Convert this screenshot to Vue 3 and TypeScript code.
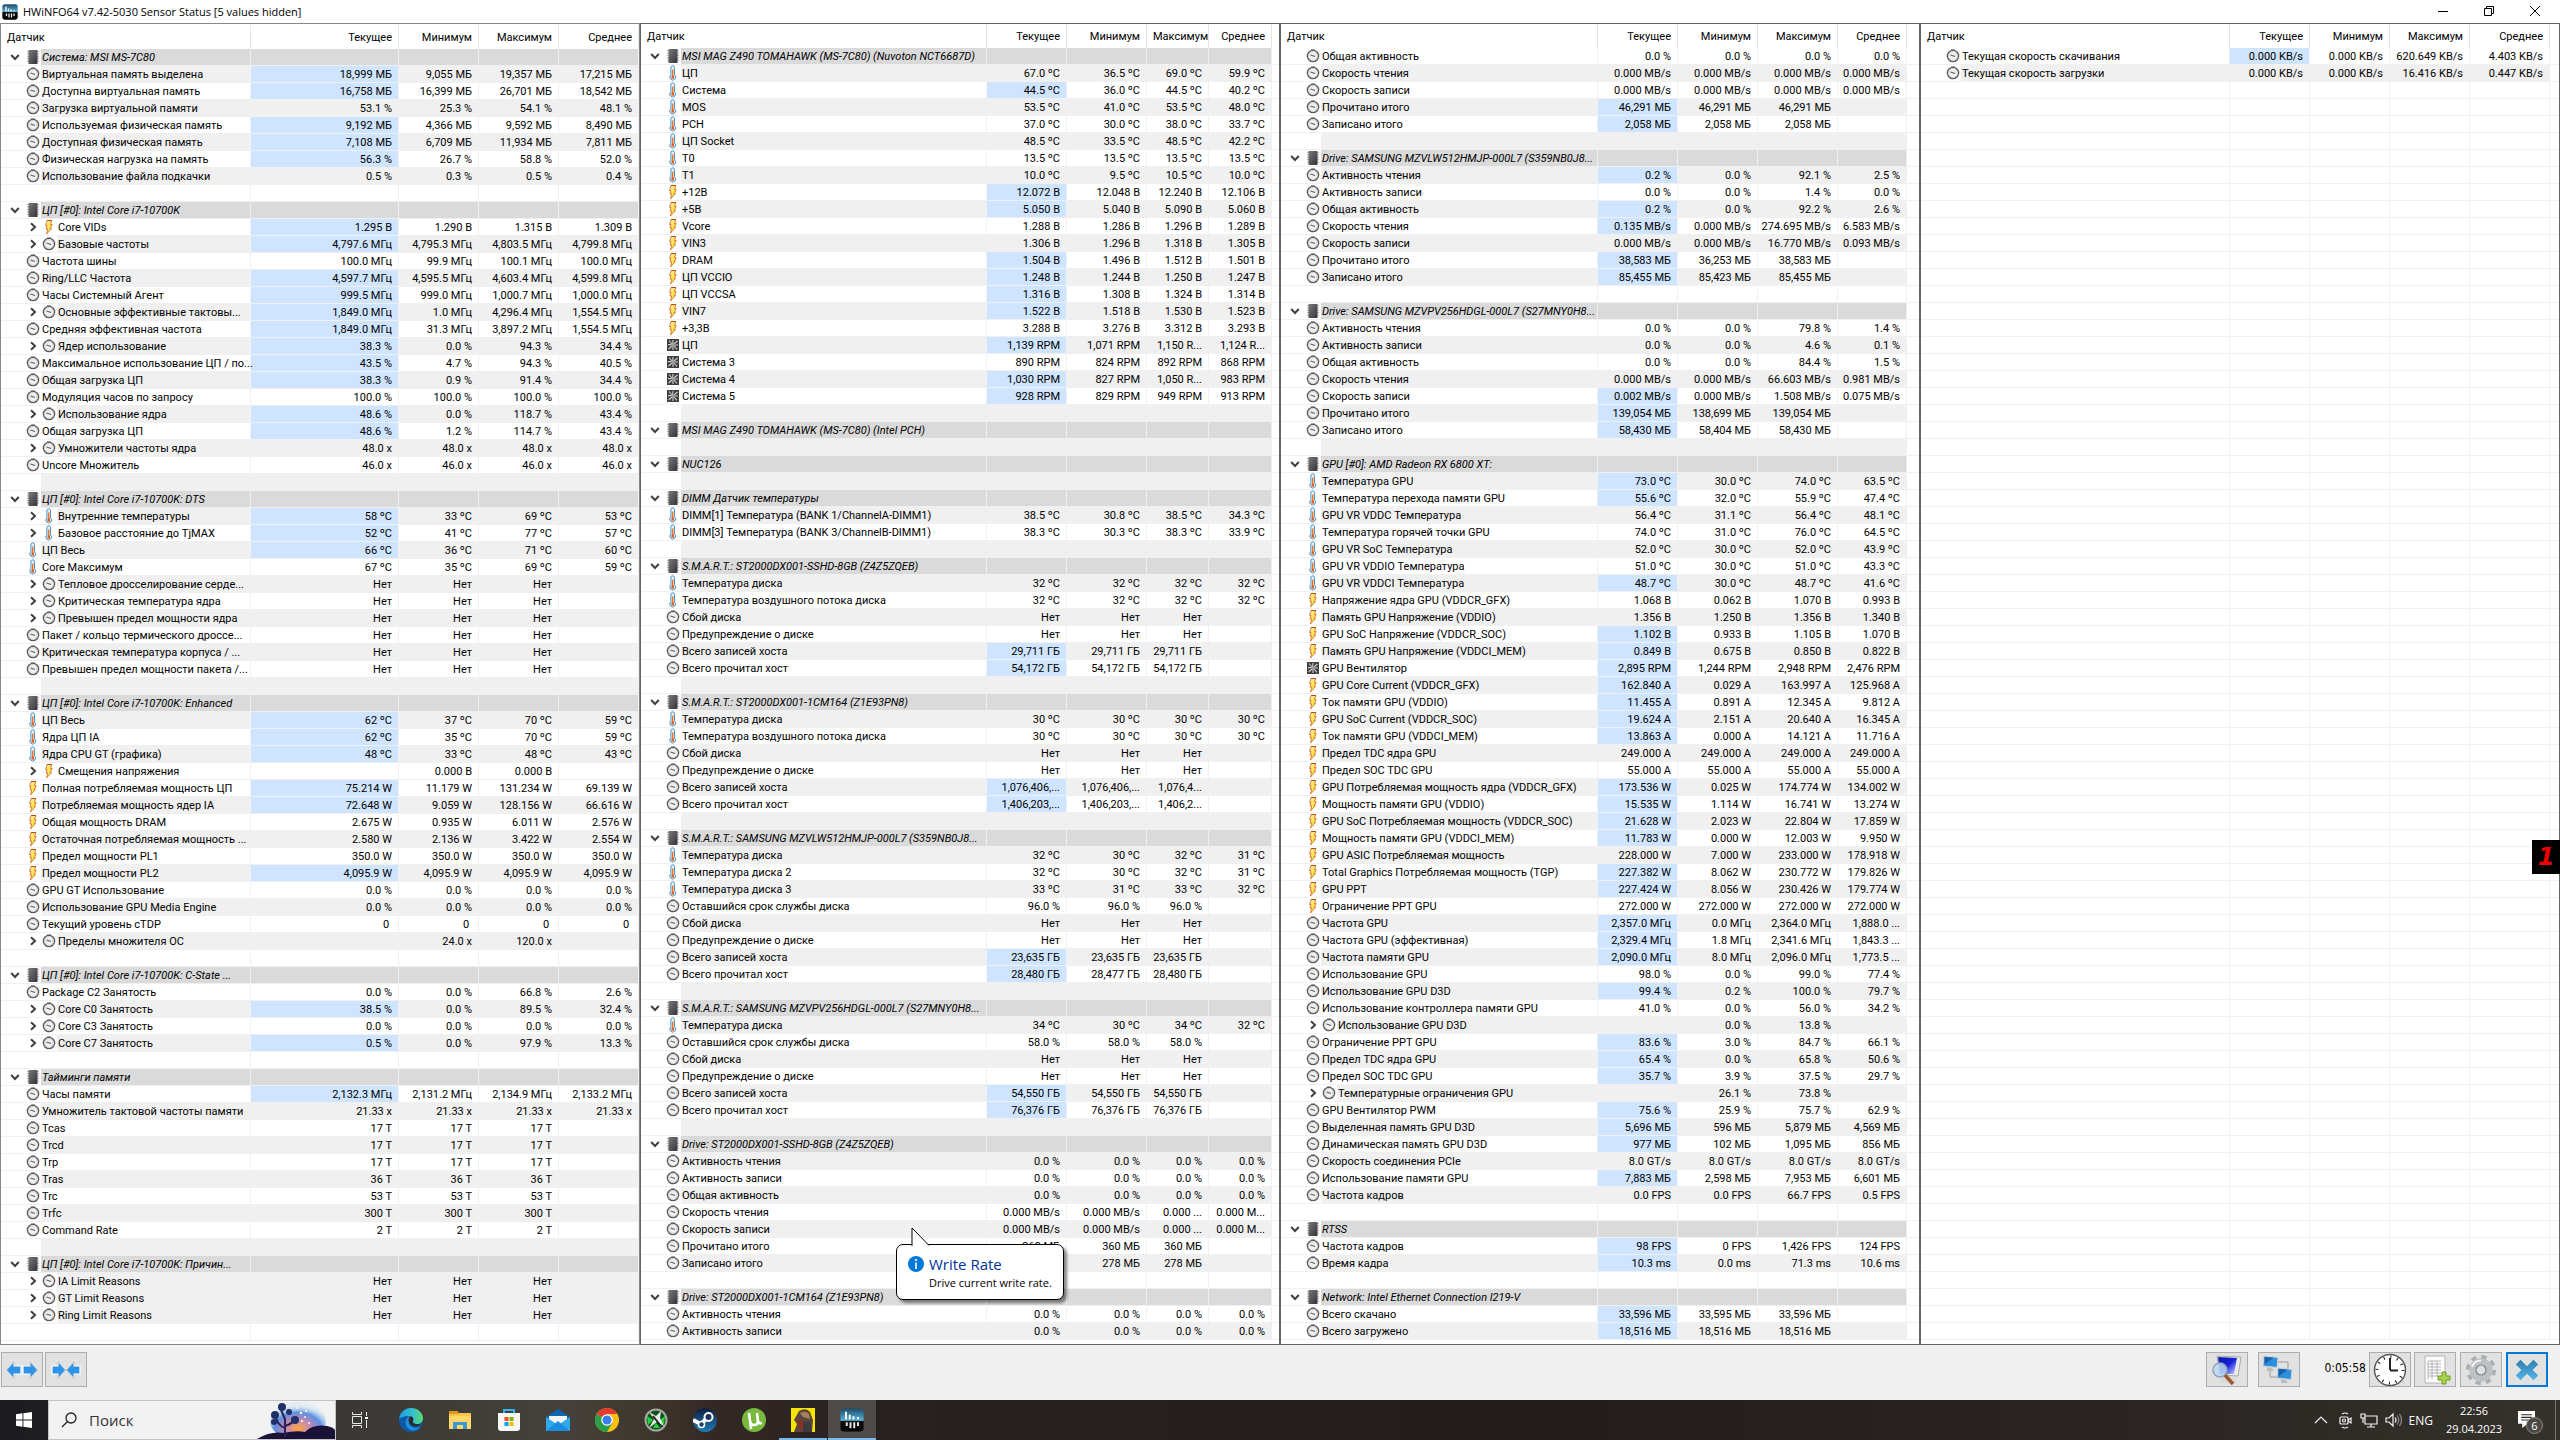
<script setup lang="ts">
import { computed } from 'vue'

type Kind = 'group' | 'blank' | 'clock' | 'temp' | 'volt' | 'fan'
interface Row { kind: Kind; nested: boolean; shaded: boolean; hot: boolean; tip: boolean; name: string; values: string[] }
interface Panel { id: string; widths: number[]; rest: number; rows: Row[] }

const KINDS: Record<string, Kind> = { G: 'group', B: 'blank', c: 'clock', t: 'temp', v: 'volt', f: 'fan' }
const ROW_COUNT = 76

// Line format: kind letter, then flags (> nested, # shaded, * changed value, ! balloon), name and four values
function parse(text: string): Row[] {
  return text.trim().split('\n').map((line) => {
    const [code, name = '', ...values] = line.split('|')
    return {
      kind: KINDS[code[0]],
      nested: code.includes('>'),
      shaded: code.includes('#'),
      hot: code.includes('*'),
      tip: code.includes('!'),
      name,
      values: [0, 1, 2, 3].map((i) => values[i] ?? ''),
    }
  })
}

const first = `
G|Система: MSI MS-7C80
c#*|Виртуальная память выделена|18,999 МБ|9,055 МБ|19,357 МБ|17,215 МБ
c*|Доступна виртуальная память|16,758 МБ|16,399 МБ|26,701 МБ|18,542 МБ
c#|Загрузка виртуальной памяти|53.1 %|25.3 %|54.1 %|48.1 %
c*|Используемая физическая память|9,192 МБ|4,366 МБ|9,592 МБ|8,490 МБ
c#*|Доступная физическая память|7,108 МБ|6,709 МБ|11,934 МБ|7,811 МБ
c*|Физическая нагрузка на память|56.3 %|26.7 %|58.8 %|52.0 %
c#|Использование файла подкачки|0.5 %|0.3 %|0.5 %|0.4 %
B
G|ЦП [#0]: Intel Core i7-10700K
v>*|Core VIDs|1.295 В|1.290 В|1.315 В|1.309 В
c>#*|Базовые частоты|4,797.6 МГц|4,795.3 МГц|4,803.5 МГц|4,799.8 МГц
c|Частота шины|100.0 МГц|99.9 МГц|100.1 МГц|100.0 МГц
c#*|Ring/LLC Частота|4,597.7 МГц|4,595.5 МГц|4,603.4 МГц|4,599.8 МГц
c*|Часы Системный Агент|999.5 МГц|999.0 МГц|1,000.7 МГц|1,000.0 МГц
c>#*|Основные эффективные тактовы...|1,849.0 МГц|1.0 МГц|4,296.4 МГц|1,554.5 МГц
c*|Средняя эффективная частота|1,849.0 МГц|31.3 МГц|3,897.2 МГц|1,554.5 МГц
c>#*|Ядер использование|38.3 %|0.0 %|94.3 %|34.4 %
c*|Максимальное использование ЦП / по...|43.5 %|4.7 %|94.3 %|40.5 %
c#*|Общая загрузка ЦП|38.3 %|0.9 %|91.4 %|34.4 %
c|Модуляция часов по запросу|100.0 %|100.0 %|100.0 %|100.0 %
c>#*|Использование ядра|48.6 %|0.0 %|118.7 %|43.4 %
c*|Общая загрузка ЦП|48.6 %|1.2 %|114.7 %|43.4 %
c>#|Умножители частоты ядра|48.0 x|48.0 x|48.0 x|48.0 x
c|Uncore Множитель|46.0 x|46.0 x|46.0 x|46.0 x
B#
G|ЦП [#0]: Intel Core i7-10700K: DTS
t>#*|Внутренние температуры|58 ºC|33 ºC|69 ºC|53 ºC
t>*|Базовое расстояние до TjMAX|52 ºC|41 ºC|77 ºC|57 ºC
t#*|ЦП Весь|66 ºC|36 ºC|71 ºC|60 ºC
t|Core Максимум|67 ºC|35 ºC|69 ºC|59 ºC
c>#|Тепловое дросселирование серде...|Нет|Нет|Нет
c>|Критическая температура ядра|Нет|Нет|Нет
c>#|Превышен предел мощности ядра|Нет|Нет|Нет
c|Пакет / кольцо термического дроссе...|Нет|Нет|Нет
c#|Критическая температура корпуса / ...|Нет|Нет|Нет
c|Превышен предел мощности пакета /...|Нет|Нет|Нет
B#
G|ЦП [#0]: Intel Core i7-10700K: Enhanced
t#*|ЦП Весь|62 ºC|37 ºC|70 ºC|59 ºC
t*|Ядра ЦП IA|62 ºC|35 ºC|70 ºC|59 ºC
t#*|Ядра CPU GT (графика)|48 ºC|33 ºC|48 ºC|43 ºC
v>|Смещения напряжения||0.000 В|0.000 В
v*|Полная потребляемая мощность ЦП|75.214 W|11.179 W|131.234 W|69.139 W
v#*|Потребляемая мощность ядер IA|72.648 W|9.059 W|128.156 W|66.616 W
v|Общая мощность DRAM|2.675 W|0.935 W|6.011 W|2.576 W
v#|Остаточная потребляемая мощность ...|2.580 W|2.136 W|3.422 W|2.554 W
v|Предел мощности PL1|350.0 W|350.0 W|350.0 W|350.0 W
v#*|Предел мощности PL2|4,095.9 W|4,095.9 W|4,095.9 W|4,095.9 W
c|GPU GT Использование|0.0 %|0.0 %|0.0 %|0.0 %
c#|Использование GPU Media Engine|0.0 %|0.0 %|0.0 %|0.0 %
c|Текущий уровень cTDP|0 |0 |0 |0 
c>#|Пределы множителя ОС||24.0 x|120.0 x
B
G|ЦП [#0]: Intel Core i7-10700K: C-State ...
c|Package C2 Занятость|0.0 %|0.0 %|66.8 %|2.6 %
c>#*|Core C0 Занятость|38.5 %|0.0 %|89.5 %|32.4 %
c>|Core C3 Занятость|0.0 %|0.0 %|0.0 %|0.0 %
c>#*|Core C7 Занятость|0.5 %|0.0 %|97.9 %|13.3 %
B
G|Тайминги памяти
c*|Часы памяти|2,132.3 МГц|2,131.2 МГц|2,134.9 МГц|2,133.2 МГц
c#|Умножитель тактовой частоты памяти|21.33 x|21.33 x|21.33 x|21.33 x
c|Tcas|17 T|17 T|17 T
c#|Trcd|17 T|17 T|17 T
c|Trp|17 T|17 T|17 T
c#|Tras|36 T|36 T|36 T
c|Trc|53 T|53 T|53 T
c#|Trfc|300 T|300 T|300 T
c|Command Rate|2 T|2 T|2 T
B#
G|ЦП [#0]: Intel Core i7-10700K: Причин...
c>#|IA Limit Reasons|Нет|Нет|Нет
c>#|GT Limit Reasons|Нет|Нет|Нет
c>#|Ring Limit Reasons|Нет|Нет|Нет`

const second = `
G|MSI MAG Z490 TOMAHAWK (MS-7C80) (Nuvoton NCT6687D)
t#|ЦП|67.0 ºC|36.5 ºC|69.0 ºC|59.9 ºC
t*|Система|44.5 ºC|36.0 ºC|44.5 ºC|40.2 ºC
t#|MOS|53.5 ºC|41.0 ºC|53.5 ºC|48.0 ºC
t|PCH|37.0 ºC|30.0 ºC|38.0 ºC|33.7 ºC
t#|ЦП Socket|48.5 ºC|33.5 ºC|48.5 ºC|42.2 ºC
t|T0|13.5 ºC|13.5 ºC|13.5 ºC|13.5 ºC
t#|T1|10.0 ºC|9.5 ºC|10.5 ºC|10.0 ºC
v*|+12В|12.072 В|12.048 В|12.240 В|12.106 В
v#*|+5В|5.050 В|5.040 В|5.090 В|5.060 В
v|Vcore|1.288 В|1.286 В|1.296 В|1.289 В
v#|VIN3|1.306 В|1.296 В|1.318 В|1.305 В
v*|DRAM|1.504 В|1.496 В|1.512 В|1.501 В
v#*|ЦП VCCIO|1.248 В|1.244 В|1.250 В|1.247 В
v*|ЦП VCCSA|1.316 В|1.308 В|1.324 В|1.314 В
v#*|VIN7|1.522 В|1.518 В|1.530 В|1.523 В
v|+3,3В|3.288 В|3.276 В|3.312 В|3.293 В
f#*|ЦП|1,139 RPM|1,071 RPM|1,150 R...|1,124 R...
f|Система 3|890 RPM|824 RPM|892 RPM|868 RPM
f#*|Система 4|1,030 RPM|827 RPM|1,050 R...|983 RPM
f*|Система 5|928 RPM|829 RPM|949 RPM|913 RPM
B#
G|MSI MAG Z490 TOMAHAWK (MS-7C80) (Intel PCH)
B#
G|NUC126
B#
G|DIMM Датчик температуры
t#|DIMM[1] Температура (BANK 1/ChannelA-DIMM1)|38.5 ºC|30.8 ºC|38.5 ºC|34.3 ºC
t|DIMM[3] Температура (BANK 3/ChannelB-DIMM1)|38.3 ºC|30.3 ºC|38.3 ºC|33.9 ºC
B#
G|S.M.A.R.T.: ST2000DX001-SSHD-8GB (Z4Z5ZQEB)
t#|Температура диска|32 ºC|32 ºC|32 ºC|32 ºC
t|Температура воздушного потока диска|32 ºC|32 ºC|32 ºC|32 ºC
c#|Сбой диска|Нет|Нет|Нет
c|Предупреждение о диске|Нет|Нет|Нет
c#*|Всего записей хоста|29,711 ГБ|29,711 ГБ|29,711 ГБ
c*|Всего прочитал хост|54,172 ГБ|54,172 ГБ|54,172 ГБ
B#
G|S.M.A.R.T.: ST2000DX001-1CM164 (Z1E93PN8)
t#|Температура диска|30 ºC|30 ºC|30 ºC|30 ºC
t|Температура воздушного потока диска|30 ºC|30 ºC|30 ºC|30 ºC
c#|Сбой диска|Нет|Нет|Нет
c|Предупреждение о диске|Нет|Нет|Нет
c#*|Всего записей хоста|1,076,406,...|1,076,406,...|1,076,4...
c*|Всего прочитал хост|1,406,203,...|1,406,203,...|1,406,2...
B#
G|S.M.A.R.T.: SAMSUNG MZVLW512HMJP-000L7 (S359NB0J8...
t#|Температура диска|32 ºC|30 ºC|32 ºC|31 ºC
t|Температура диска 2|32 ºC|30 ºC|32 ºC|31 ºC
t#|Температура диска 3|33 ºC|31 ºC|33 ºC|32 ºC
c|Оставшийся срок службы диска|96.0 %|96.0 %|96.0 %
c#|Сбой диска|Нет|Нет|Нет
c|Предупреждение о диске|Нет|Нет|Нет
c#*|Всего записей хоста|23,635 ГБ|23,635 ГБ|23,635 ГБ
c*|Всего прочитал хост|28,480 ГБ|28,477 ГБ|28,480 ГБ
B#
G|S.M.A.R.T.: SAMSUNG MZVPV256HDGL-000L7 (S27MNY0H8...
t#|Температура диска|34 ºC|30 ºC|34 ºC|32 ºC
c|Оставшийся срок службы диска|58.0 %|58.0 %|58.0 %
c#|Сбой диска|Нет|Нет|Нет
c|Предупреждение о диске|Нет|Нет|Нет
c#*|Всего записей хоста|54,550 ГБ|54,550 ГБ|54,550 ГБ
c*|Всего прочитал хост|76,376 ГБ|76,376 ГБ|76,376 ГБ
B#
G|Drive: ST2000DX001-SSHD-8GB (Z4Z5ZQEB)
c#|Активность чтения|0.0 %|0.0 %|0.0 %|0.0 %
c|Активность записи|0.0 %|0.0 %|0.0 %|0.0 %
c#|Общая активность|0.0 %|0.0 %|0.0 %|0.0 %
c|Скорость чтения|0.000 MB/s|0.000 MB/s|0.000 ...|0.000 M...
c#!|Скорость записи|0.000 MB/s|0.000 MB/s|0.000 ...|0.000 M...
c|Прочитано итого|360 МБ|360 МБ|360 МБ
c#|Записано итого|278 МБ|278 МБ|278 МБ
B
G|Drive: ST2000DX001-1CM164 (Z1E93PN8)
c|Активность чтения|0.0 %|0.0 %|0.0 %|0.0 %
c#|Активность записи|0.0 %|0.0 %|0.0 %|0.0 %`

const third = `
c|Общая активность|0.0 %|0.0 %|0.0 %|0.0 %
c#|Скорость чтения|0.000 MB/s|0.000 MB/s|0.000 MB/s|0.000 MB/s
c|Скорость записи|0.000 MB/s|0.000 MB/s|0.000 MB/s|0.000 MB/s
c#*|Прочитано итого|46,291 МБ|46,291 МБ|46,291 МБ
c*|Записано итого|2,058 МБ|2,058 МБ|2,058 МБ
B#
G|Drive: SAMSUNG MZVLW512HMJP-000L7 (S359NB0J8...
c#*|Активность чтения|0.2 %|0.0 %|92.1 %|2.5 %
c|Активность записи|0.0 %|0.0 %|1.4 %|0.0 %
c#*|Общая активность|0.2 %|0.0 %|92.2 %|2.6 %
c*|Скорость чтения|0.135 MB/s|0.000 MB/s|274.695 MB/s|6.583 MB/s
c#|Скорость записи|0.000 MB/s|0.000 MB/s|16.770 MB/s|0.093 MB/s
c*|Прочитано итого|38,583 МБ|36,253 МБ|38,583 МБ
c#*|Записано итого|85,455 МБ|85,423 МБ|85,455 МБ
B
G|Drive: SAMSUNG MZVPV256HDGL-000L7 (S27MNY0H8...
c|Активность чтения|0.0 %|0.0 %|79.8 %|1.4 %
c#|Активность записи|0.0 %|0.0 %|4.6 %|0.1 %
c|Общая активность|0.0 %|0.0 %|84.4 %|1.5 %
c#|Скорость чтения|0.000 MB/s|0.000 MB/s|66.603 MB/s|0.981 MB/s
c*|Скорость записи|0.002 MB/s|0.000 MB/s|1.508 MB/s|0.075 MB/s
c#*|Прочитано итого|139,054 МБ|138,699 МБ|139,054 МБ
c*|Записано итого|58,430 МБ|58,404 МБ|58,430 МБ
B#
G|GPU [#0]: AMD Radeon RX 6800 XT:
t#*|Температура GPU|73.0 ºC|30.0 ºC|74.0 ºC|63.5 ºC
t*|Температура перехода памяти GPU|55.6 ºC|32.0 ºC|55.9 ºC|47.4 ºC
t#|GPU VR VDDC Температура|56.4 ºC|31.1 ºC|56.4 ºC|48.1 ºC
t|Температура горячей точки GPU|74.0 ºC|31.0 ºC|76.0 ºC|64.5 ºC
t#|GPU VR SoC Температура|52.0 ºC|30.0 ºC|52.0 ºC|43.9 ºC
t|GPU VR VDDIO Температура|51.0 ºC|30.0 ºC|51.0 ºC|43.3 ºC
t#*|GPU VR VDDCI Температура|48.7 ºC|30.0 ºC|48.7 ºC|41.6 ºC
v|Напряжение ядра GPU (VDDCR_GFX)|1.068 В|0.062 В|1.070 В|0.993 В
v#|Память GPU Напряжение (VDDIO)|1.356 В|1.250 В|1.356 В|1.340 В
v*|GPU SoC Напряжение (VDDCR_SOC)|1.102 В|0.933 В|1.105 В|1.070 В
v#*|Память GPU Напряжение (VDDCI_MEM)|0.849 В|0.675 В|0.850 В|0.822 В
f*|GPU Вентилятор|2,895 RPM|1,244 RPM|2,948 RPM|2,476 RPM
v#*|GPU Core Current (VDDCR_GFX)|162.840 A|0.029 A|163.997 A|125.968 A
v*|Ток памяти GPU (VDDIO)|11.455 A|0.891 A|12.345 A|9.812 A
v#*|GPU SoC Current (VDDCR_SOC)|19.624 A|2.151 A|20.640 A|16.345 A
v*|Ток памяти GPU (VDDCI_MEM)|13.863 A|0.000 A|14.121 A|11.716 A
v#|Предел TDC ядра GPU|249.000 A|249.000 A|249.000 A|249.000 A
v|Предел SOC TDC GPU|55.000 A|55.000 A|55.000 A|55.000 A
v#*|GPU Потребляемая мощность ядра (VDDCR_GFX)|173.536 W|0.025 W|174.774 W|134.002 W
v*|Мощность памяти GPU (VDDIO)|15.535 W|1.114 W|16.741 W|13.274 W
v#*|GPU SoC Потребляемая мощность (VDDCR_SOC)|21.628 W|2.023 W|22.804 W|17.859 W
v*|Мощность памяти GPU (VDDCI_MEM)|11.783 W|0.000 W|12.003 W|9.950 W
v#|GPU ASIC Потребляемая мощность|228.000 W|7.000 W|233.000 W|178.918 W
v*|Total Graphics Потребляемая мощность (TGP)|227.382 W|8.062 W|230.772 W|179.826 W
v#*|GPU PPT|227.424 W|8.056 W|230.426 W|179.774 W
v|Ограничение PPT GPU|272.000 W|272.000 W|272.000 W|272.000 W
c#*|Частота GPU|2,357.0 МГц|0.0 МГц|2,364.0 МГц|1,888.0 ...
c*|Частота GPU (эффективная)|2,329.4 МГц|1.8 МГц|2,341.6 МГц|1,843.3 ...
c#*|Частота памяти GPU|2,090.0 МГц|8.0 МГц|2,096.0 МГц|1,773.5 ...
c|Использование GPU|98.0 %|0.0 %|99.0 %|77.4 %
c#*|Использование GPU D3D|99.4 %|0.2 %|100.0 %|79.7 %
c|Использование контроллера памяти GPU|41.0 %|0.0 %|56.0 %|34.2 %
c>#|Использование GPU D3D||0.0 %|13.8 %
c*|Ограничение PPT GPU|83.6 %|3.0 %|84.7 %|66.1 %
c#*|Предел TDC ядра GPU|65.4 %|0.0 %|65.8 %|50.6 %
c*|Предел SOC TDC GPU|35.7 %|3.9 %|37.5 %|29.7 %
c>#|Температурные ограничения GPU||26.1 %|73.8 %
c*|GPU Вентилятор PWM|75.6 %|25.9 %|75.7 %|62.9 %
c#*|Выделенная память GPU D3D|5,696 МБ|596 МБ|5,879 МБ|4,569 МБ
c*|Динамическая память GPU D3D|977 МБ|102 МБ|1,095 МБ|856 МБ
c#|Скорость соединения PCIe|8.0 GT/s|8.0 GT/s|8.0 GT/s|8.0 GT/s
c*|Использование памяти GPU|7,883 МБ|2,598 МБ|7,953 МБ|6,601 МБ
c#|Частота кадров|0.0 FPS|0.0 FPS|66.7 FPS|0.5 FPS
B
G|RTSS
c*|Частота кадров|98 FPS|0 FPS|1,426 FPS|124 FPS
c#*|Время кадра|10.3 ms|0.0 ms|71.3 ms|10.6 ms
B
G|Network: Intel Ethernet Connection I219-V
c*|Всего скачано|33,596 МБ|33,595 МБ|33,596 МБ
c#*|Всего загружено|18,516 МБ|18,516 МБ|18,516 МБ`

const fourth = `
c*|Текущая скорость скачивания|0.000 KB/s|0.000 KB/s|620.649 KB/s|4.403 KB/s
c#|Текущая скорость загрузки|0.000 KB/s|0.000 KB/s|16.416 KB/s|0.447 KB/s`

const headings = ['Датчик', 'Текущее', 'Минимум', 'Максимум', 'Среднее']

function pad(rows: Row[]): Row[] {
  const extra = Array.from({ length: Math.max(0, ROW_COUNT - rows.length) }, () => parse('B')[0])
  return rows.concat(extra)
}

const panels = computed<Panel[]>(() => [
  { id: 'a', widths: [148, 80, 80, 80], rest: 0, rows: pad(parse(first)) },
  { id: 'b', widths: [80, 80, 62, 63], rest: 7, rows: pad(parse(second)) },
  { id: 'c', widths: [80, 80, 80, 69], rest: 12, rows: pad(parse(third)) },
  { id: 'd', widths: [80, 80, 80, 80], rest: 9, rows: pad(parse(fourth)) },
])

const apps = ['edge', 'explorer', 'store', 'mail', 'chrome', 'xbox', 'steam', 'torrent', 'game', 'hwinfo']
</script>

<template>
  <div class="screen">
    <svg class="defs" aria-hidden="true">
      <defs>
        <linearGradient id="gChip" x1="0" y1="0" x2="1" y2="1"><stop offset="0" stop-color="#7a7a7e" /><stop offset="1" stop-color="#333338" /></linearGradient>
        <linearGradient id="gBolt" x1="0" y1="0" x2="1" y2="1"><stop offset="0" stop-color="#fff3b0" /><stop offset="1" stop-color="#ffd000" /></linearGradient>
        <linearGradient id="gHw" x1="0" y1="0" x2="0" y2="1"><stop offset="0" stop-color="#1d4a66" /><stop offset="0.52" stop-color="#58b4dc" /><stop offset="0.53" stop-color="#111" /><stop offset="1" stop-color="#000" /></linearGradient>
        <linearGradient id="gScreen" x1="0" y1="0" x2="1" y2="1"><stop offset="0" stop-color="#0a1aa8" /><stop offset="0.5" stop-color="#1420d8" /><stop offset="1" stop-color="#cfe0ff" /></linearGradient>
        <linearGradient id="gCross" x1="0" y1="0" x2="0" y2="1"><stop offset="0" stop-color="#2f7fae" /><stop offset="1" stop-color="#52b6ea" /></linearGradient>
        <linearGradient id="gEdge" x1="0" y1="0" x2="1" y2="0"><stop offset="0" stop-color="#1b9de2" /><stop offset="0.6" stop-color="#35c1c8" /><stop offset="1" stop-color="#5fdc6a" /></linearGradient>
        <linearGradient id="gSteam" x1="0" y1="0" x2="0" y2="1"><stop offset="0" stop-color="#101d3c" /><stop offset="1" stop-color="#1f7db8" /></linearGradient>
        <radialGradient id="gSun" cx="0.5" cy="0.7" r="0.6"><stop offset="0" stop-color="#ffa63a" /><stop offset="0.35" stop-color="#c98ab0" /><stop offset="0.7" stop-color="#5f8fe0" /><stop offset="1" stop-color="#a5d6f5" stop-opacity="0.2" /></radialGradient>
        <symbol id="clock" viewBox="0 0 16 16">
          <path d="M6 1h4v2H6z" fill="#aaa" />
          <circle cx="8" cy="8" r="5.6" fill="#f1f1f1" stroke="#5c5c5c" stroke-width="1.4" />
          <circle cx="8" cy="8" r="4.4" fill="none" stroke="#c9c9c9" stroke-width="0.8" />
          <path d="M5.5 7l4.6 1.600" stroke="#6b5555" stroke-width="1.1" />
        </symbol>
        <symbol id="temp" viewBox="0 0 16 16">
          <path d="M5.9 2.6a1.8 1.8 0 0 1 3.6 0v7.2a2.9 2.9 0 1 1-3.6 0z" fill="#e4f2fb" stroke="#4a93c8" />
          <path d="M7.7 4.500v7" stroke="#f06a1c" stroke-width="1.3" />
          <path d="M6.4 10.6h2.6v3H6.4z" fill="#e85a10" />
        </symbol>
        <symbol id="volt" viewBox="0 0 16 16">
          <path d="M6 1.500h4.800L9.500 5.500h1.700L9.300 9.500h1.200L5.500 15l1.200-5H5L6 6.500H4.600z" fill="url(#gBolt)" stroke="#d0661a" stroke-width="0.8" />
          <path d="M6 1.500h4.800" stroke="#b04a1c" stroke-width="1" />
        </symbol>
        <symbol id="fan" viewBox="0 0 16 16">
          <path d="M2 2h12v12H2z" fill="#3f3f3f" />
          <path d="M4 3.500l3 3.500M8 3l-.3 4M12.500 4L9 7M13 8H9.400M12 12.300L9 9M8 13V9.200M3.600 12L7 9M3 7.600h3.600" stroke="#cfcfcf" stroke-width="1.1" />
          <circle cx="8" cy="8" r="1.500" fill="#a99" />
        </symbol>
        <symbol id="group" viewBox="0 0 16 16">
          <path d="M2 2.500h12M2 4.900h12M2 7.300h12M2 9.700h12M2 12.100h12" stroke="#b5b5b5" stroke-width="1.2" />
          <path d="M3.500 1h9v14h-9z" fill="url(#gChip)" />
        </symbol>
        <symbol id="hw" viewBox="0 0 16 16">
          <rect x="0.3" y="0.3" width="15.4" height="15.4" rx="2.4" fill="url(#gHw)" />
          <path d="M4 2.500v5M6.500 4.500v3M9 5.500v2M12 6v1.500" stroke="#fff" stroke-width="1.3" />
          <path d="M4.500 9.500v2.500M7 9.500v4M9.500 9.500v4M12 9.500v2.500" stroke="#e8e8e8" stroke-width="1.3" />
        </symbol>
        <symbol id="monitor" viewBox="0 0 20 18">
          <path d="M2 1l14 1.500-1 10L1 11z" fill="#2b8fdb" stroke="#cfd3d6" />
          <path d="M2.500 2l9 .8L3 9z" fill="#1b5fa8" />
          <path d="M5 12l5 1 2 3H5z" fill="#b9bdc0" />
        </symbol>
      </defs>
    </svg>

    <header class="titlebar">
      <svg class="app-icon"><use href="#hw" /></svg>
      <h1 class="title">HWiNFO64 v7.42-5030 Sensor Status [5 values hidden]</h1>
      <div class="winbtns">
        <button type="button" aria-label="Свернуть"><svg viewBox="0 0 10 10"><path d="M0 5.500h10" stroke="#000" /></svg></button>
        <button type="button" aria-label="Восстановить"><svg viewBox="0 0 10 10" fill="none" stroke="#000"><path d="M.5 2.500h7v7h-7zM2.500 2.500v-2h7v7h-2" /></svg></button>
        <button type="button" aria-label="Закрыть"><svg viewBox="0 0 10 10" fill="none" stroke="#000"><path d="M0 0l10 10M10 0L0 10" /></svg></button>
      </div>
    </header>

    <main class="panels">
      <section v-for="p in panels" :key="p.id" class="panel">
        <table class="grid">
          <colgroup>
            <col />
            <col v-for="(w, i) in p.widths" :key="i" :style="{ width: w + 'px' }" />
            <col v-if="p.rest" :style="{ width: p.rest + 'px' }" />
          </colgroup>
          <thead>
            <tr>
              <th v-for="h in headings" :key="h" scope="col">{{ h }}</th>
              <td v-if="p.rest" class="rest"></td>
            </tr>
          </thead>
          <tbody>
            <tr v-for="(r, i) in p.rows" :key="i" :class="[r.kind, { shaded: r.shaded, nested: r.nested }]">
              <td class="name">
                <div class="line">
                  <span class="gutter">
                    <button v-if="r.kind === 'group'" type="button" class="toggle" aria-label="Свернуть группу">
                      <svg viewBox="0 0 10 10"><path d="M1.200 3l3.800 4 3.800-4" /></svg>
                    </button>
                  </span>
                  <button v-if="r.nested" type="button" class="toggle inner" aria-label="Развернуть">
                    <svg viewBox="0 0 10 10"><path d="M3 1.200L7 5 3 8.800" /></svg>
                  </button>
                  <svg class="ico"><use v-if="r.kind !== 'blank'" :href="'#' + r.kind" /></svg>
                  <span class="label">{{ r.name }}</span>
                </div>
                <div v-if="r.tip" class="balloon" role="tooltip">
                  <svg class="tail" viewBox="0 0 20 19"><path d="M1 19V1l17 17.500" fill="#fff" stroke="#000" /></svg>
                  <svg class="info" viewBox="0 0 16 16"><circle cx="8" cy="8" r="8" fill="#0078d7" /><circle cx="8" cy="4" r="1.100" fill="#fff" /><path d="M8 6.500V13" stroke="#fff" stroke-width="1.600" /></svg>
                  <div class="tiptext"><strong>Write Rate</strong><span>Drive current write rate.</span></div>
                </div>
              </td>
              <td v-for="(v, k) in r.values" :key="k" class="val" :class="{ hot: k === 0 && r.hot }">{{ v }}</td>
              <td v-if="p.rest" class="rest"></td>
            </tr>
          </tbody>
        </table>
      </section>
    </main>

    <footer class="tools">
      <div class="side">
        <button type="button" aria-label="Расширить">
          <svg viewBox="0 0 34 20" width="34" height="20"><path d="M1 10l8-9v5h7v8H9v5zM33 10l-8-9v5h-7v8h7v5z" fill="#2f93e6" stroke="#fff" stroke-width="1.200" /><path d="M1 10l8-9v5M33 10l-8-9v5M9 14v5l-8-9M25 14v5l8-9" fill="none" stroke="#9a9a9a" stroke-width="0.600" /></svg>
        </button>
        <button type="button" aria-label="Сузить">
          <svg viewBox="0 0 34 20" width="34" height="20"><path d="M17 10L9 1v5H3v8h6v5zM17 10l8-9v5h6v8h-6v5z" fill="#2f93e6" stroke="#fff" stroke-width="1.200" /><path d="M17 10L9 1v5M17 10l8-9v5M9 14v5l8-9M25 14v5l-8-9" fill="none" stroke="#9a9a9a" stroke-width="0.600" /></svg>
        </button>
      </div>
      <div class="side right">
        <button type="button" aria-label="Сводка" class="spaced">
          <svg viewBox="0 0 32 32" width="32" height="32"><path d="M6 2l24 1-3 19-19-1z" fill="#ececec" stroke="#aaa" /><path d="M7 3l19 1-3 16H9z" fill="url(#gScreen)" /><path d="M10 24h14l2 5H10z" fill="#d8d8d8" /><circle cx="9" cy="16" r="7" fill="#bcd9f5" fill-opacity="0.850" stroke="#8ea4b8" stroke-width="1.500" /><path d="M14 21l8 9" stroke="#9b5a30" stroke-width="3.500" /></svg>
        </button>
        <button type="button" aria-label="Удалённый доступ">
          <svg viewBox="0 0 34 32" width="34" height="32"><path d="M14 8h12v7M8 15v8h8" fill="none" stroke="#999" /><use href="#monitor" x="0" y="1" width="20" height="18" /><use href="#monitor" x="14" y="13" width="20" height="18" /></svg>
        </button>
        <output class="elapsed">0:05:58</output>
        <button type="button" aria-label="Сбросить часы">
          <svg viewBox="0 0 34 34" width="34" height="34"><circle cx="17" cy="17" r="15.500" fill="#fff" stroke="#555" stroke-width="1.400" /><circle cx="17" cy="17" r="13" fill="none" stroke="#111" stroke-width="3" stroke-dasharray="1 5.807" /><path d="M17 17V5M17 17.500h8" stroke="#222" stroke-width="2" /></svg>
        </button>
        <button type="button" aria-label="Записать отчёт" class="spaced-s">
          <svg viewBox="0 0 32 32" width="32" height="32"><path d="M6 2h20v27H6z" fill="#fbfbfb" stroke="#b5b5b5" /><path d="M9 7h13M9 10h13M9 13h13M9 16h13M9 19h13M9 22h10M9 7v18M13 7v18M18 7v15" stroke="#b5b5b5" fill="none" /><path d="M23 18h4v4h4v4h-4v4h-4v-4h-4v-4h4z" fill="#a6d34f" stroke="#6d9a1f" /></svg>
        </button>
        <button type="button" aria-label="Настройки" class="spaced-s">
          <svg viewBox="0 0 32 32" width="32" height="32"><circle cx="16" cy="16" r="13" fill="none" stroke="#a9aeb0" stroke-width="4" stroke-dasharray="5.200 5.010" /><circle cx="16" cy="16" r="8.500" fill="none" stroke="#bcc1c3" stroke-width="6.500" /><circle cx="16" cy="16" r="5" fill="#e1e1e1" stroke="#7f8587" stroke-width="1.200" /><path d="M7 13a9.500 9.500 0 0 1 9-6.500" fill="none" stroke="#f5f5f5" stroke-width="2" /></svg>
        </button>
        <button type="button" aria-label="Закрыть датчики" class="primary">
          <svg viewBox="0 0 28 28" width="26" height="26"><path d="M7 3l7 7 7-7 5 5-6 6 6 6-5 5-7-7-7 7-5-5 6-6-6-6z" fill="url(#gCross)" /></svg>
        </button>
      </div>
    </footer>

    <aside class="osd" aria-label="Оверлей">1</aside>

    <nav class="taskbar">
      <button type="button" class="start" aria-label="Пуск">
        <svg viewBox="0 0 16 16" width="16" height="16" fill="#fff"><path d="M0 2.200l6.500-.9v6.200H0zM7.400 1.200L16 0v7.500H7.400zM0 8.500h6.500v6.200L0 13.800zM7.400 8.500H16V16l-8.600-1.200z" /></svg>
      </button>
      <label class="search">
        <svg class="lens" viewBox="0 0 16 16" fill="none" stroke="#222" stroke-width="1.300"><circle cx="10" cy="6" r="5" /><path d="M6.500 9.500L1 15" /></svg>
        <input type="text" placeholder="Поиск" aria-label="Поиск" />
        <svg class="art" viewBox="0 0 78 38">
          <ellipse cx="41" cy="20" rx="28" ry="19" fill="url(#gSun)" />
          <path d="M0 38q14-8 26-6 14-3 22-1 8-8 22-6 6 1 8 4v9z" fill="#1a1238" />
          <path d="M28 36V17M28 27q-8-3-9-11M28 25q8-2 9-8M28 18l-4-9" stroke="#2a1f4e" stroke-width="2" fill="none" />
          <g fill="#22306a"><circle cx="25" cy="6" r="4" /><circle cx="18" cy="14" r="4" /><circle cx="32" cy="11" r="3" /><circle cx="38" cy="19" r="4" /><circle cx="17" cy="21" r="3" /></g>
          <g fill="#fff5cf"><circle cx="40" cy="7" r="1" /><circle cx="44" cy="12" r="1.200" /><circle cx="48" cy="16" r="1" /><circle cx="45" cy="20" r="1.200" /><circle cx="52" cy="22" r="1" /><circle cx="49" cy="10" r="1" /></g>
        </svg>
      </label>
      <button type="button" class="taskview" aria-label="Представление задач">
        <svg viewBox="0 0 18 16" width="18" height="16" fill="none" stroke="#e8e8e8"><path d="M1.500 4.500h9v7h-9zM1.500 0v2.500h9V0M1.500 16v-2.500h9V16M15.500 0v4M15.500 8v8" /><path d="M14 5h3v2h-3z" fill="#fff" stroke="none" /></svg>
      </button>
      <button v-for="a in apps" :key="a" type="button" class="task" :class="{ open: a === 'game', active: a === 'hwinfo' }" :aria-label="a">
        <svg v-if="a === 'edge'" viewBox="0 0 24 24"><circle cx="12" cy="12" r="12" fill="#0c59a4" /><path d="M0 11C1 4 6 0 12 0c7 0 12 5 12 10 0 4-3 6-6 6-3 0-5-1-4-3 1-3-1-5-4-5-5 0-9 2-10 3z" fill="url(#gEdge)" /><path d="M10 8c-4 3-5 9 0 13 4 3 9 1 12-2-6 2-11 0-12-4-.5-3 1-5 2-6z" fill="#1f8fe0" /><path d="M10.500 9c-2 3-1 8 4 9 3 .5 6-.500 7.500-1.500L19 16c-3 .5-6-1-5-3s0-3.500-1.500-4.500z" fill="#2d2c2a" /></svg>
        <svg v-else-if="a === 'explorer'" viewBox="0 0 24 24"><path d="M1 3h8l2 2h12v16H1z" fill="#f6c64c" /><path d="M1 3h8l2 3H1z" fill="#d99b1c" /><path d="M1 8h22v13H1z" fill="#ffd868" /><path d="M5 21v-7h14v7h-4v-4H9v4z" fill="#3c96d8" /></svg>
        <svg v-else-if="a === 'store'" viewBox="0 0 24 24"><path d="M7 6V2h10v4" fill="none" stroke="#35b3ea" stroke-width="2" /><path d="M1 5h22v15q0 3-3 3H4q-3 0-3-3z" fill="#f6f6f6" /><path d="M7.500 9h4v4h-4z" fill="#f04e1f" /><path d="M12.500 9h4v4h-4z" fill="#7db700" /><path d="M7.500 14h4v4h-4z" fill="#00a2ea" /><path d="M12.500 14h4v4h-4z" fill="#fdb800" /></svg>
        <svg v-else-if="a === 'mail'" viewBox="0 0 24 24"><path d="M0 9l12-8 12 8v14H0z" fill="#0c66b8" /><path d="M3 8h18v10H3z" fill="#f4f4f4" /><path d="M0 9l12 8 12-8v14H0z" fill="#2fa8ec" /><path d="M0 23L12 13l12 10z" fill="#1b8fdf" /></svg>
        <svg v-else-if="a === 'chrome'" viewBox="0 0 24 24"><circle cx="12" cy="12" r="12" fill="#fbc116" /><path d="M12 12L1.600 6A12 12 0 0 1 22.400 6H12z" fill="#e33b2e" /><path d="M1.600 6A12 12 0 0 0 12 24l5.200-9L12 12z" fill="#2a9d46" /><circle cx="12" cy="12" r="5.800" fill="#fff" /><circle cx="12" cy="12" r="4.500" fill="#3b7ded" /></svg>
        <svg v-else-if="a === 'xbox'" viewBox="0 0 24 24"><circle cx="12" cy="12" r="10.500" fill="#14501c" stroke="#a3a9a3" stroke-width="2" /><path d="M3 8l6 4-5 5zM13 14l8-6-1 8zM9 20l3-5 4 5z" fill="#27d23f" /><path d="M5 4l7 4 5-5-1 7 4 8-7-4-8 6 5-9z" fill="#e6ece6" /><path d="M9 8l7 9" stroke="#222" stroke-width="2" /></svg>
        <svg v-else-if="a === 'steam'" viewBox="0 0 24 24"><circle cx="12" cy="12" r="12" fill="url(#gSteam)" /><path d="M0 12l8 4 6-6" stroke="#fff" stroke-width="4" fill="none" /><circle cx="15.500" cy="9" r="4" fill="#17305c" stroke="#fff" stroke-width="2" /><circle cx="8.500" cy="16.500" r="3" fill="#17406f" stroke="#fff" stroke-width="1.500" /></svg>
        <svg v-else-if="a === 'torrent'" viewBox="0 0 24 24"><circle cx="12" cy="12" r="12" fill="#78b83c" /><path d="M7 5l1 8q.5 4 4 4t4-3L15 5M16 13q1 3 4 2M8 13l1 8" stroke="#fff" stroke-width="2.600" fill="none" /></svg>
        <svg v-else-if="a === 'game'" viewBox="0 0 24 24"><path d="M0 0h24v24H0z" fill="#f4e400" /><path d="M8 3q7-4 11 1l3 8-1 12H3l3-8-3-4z" fill="#5a463c" /><path d="M9 5q5-3 9 1l1 5-7-2z" fill="#a77f5e" /><path d="M6 12l9 2 3 6-9 2z" fill="#8d2f23" /><path d="M12 14l7-1 2 11h-9z" fill="#3b3b42" /></svg>
        <svg v-else viewBox="0 0 16 16"><use href="#hw" /></svg>
      </button>
      <div class="tray">
        <button type="button" class="tray-btn" aria-label="Скрытые значки"><svg viewBox="0 0 18 18"><path d="M3 12l6-6 6 6" /></svg></button>
        <button type="button" class="tray-btn" aria-label="Камера"><svg viewBox="0 0 18 18"><rect x="4" y="6" width="8" height="7" rx="1" /><path d="M12 9l3-2v5l-3-2M6 3q3-2 6 0M6 16q3 2 6 0" /><circle cx="8" cy="9.500" r="1.500" /></svg></button>
        <button type="button" class="tray-btn" aria-label="Сеть"><svg viewBox="0 0 18 18"><path d="M5 5h12v8H5zM11 13v3M7 16h8M1 3h4v4H1zM3 7v5" /></svg></button>
        <button type="button" class="tray-btn" aria-label="Громкость"><svg viewBox="0 0 18 18"><path d="M2 7h3l4-4v12l-4-4H2zM11 6.500q2 2.500 0 5" /><path d="M13 4.500q3.500 4.500 0 9M15.500 3q4 6 0 12" stroke="#8c8a88" /></svg></button>
        <button type="button" class="lang">ENG</button>
        <div class="clockbox"><time>22:56</time><time>29.04.2023</time></div>
        <button type="button" class="notes" aria-label="Уведомления">
          <svg viewBox="0 0 16 16" width="17" height="17"><path d="M0 0h16v12H9l-5 4v-4H0z" fill="#fff" /><path d="M3 3.500h10M3 6h10M3 8.500h7" stroke="#2c2825" /></svg>
          <span class="badge">6</span>
        </button>
        <span class="peek"></span>
      </div>
    </nav>
  </div>
</template>

<style>
body { margin: 0; background: #f0f0f0; }
</style>

<style scoped>
.screen {
  position: relative;
  display: flex;
  flex-direction: column;
  min-height: 100vh;
  background: #f0f0f0;
  color: #000;
  font-family: Roboto, "Liberation Sans", sans-serif;
  font-size: 11px;
}
.defs { position: absolute; width: 0; height: 0; }
button { padding: 0; border: 0; background: none; color: inherit; font: inherit; }

.titlebar { display: flex; align-items: center; height: 23px; background: #fff; }
.app-icon { width: 16px; height: 16px; margin: 0 5px 0 2px; }
.title { flex: 1; margin: 0; font: 400 11px/20px "Open Sans", "Noto Sans", sans-serif; }
.winbtns { display: flex; align-self: stretch; margin-right: 2px; padding-bottom: 2px; }
.winbtns button { display: flex; align-items: center; justify-content: center; width: 46px; }
.winbtns svg { width: 10px; height: 10px; }

.panels { display: flex; flex: 1; }
.panel {
  flex: 1 1 0;
  min-width: 0;
  box-sizing: border-box;
  border: 1px solid #646464;
  background: #fff;
}
.panel:first-child { padding-top: 1px; border-color: #828790; }
.grid { width: 100%; border-collapse: separate; border-spacing: 0; table-layout: fixed; }
.grid th, .grid td {
  box-sizing: border-box;
  padding: 0;
  white-space: nowrap;
  font-weight: 400;
  border-right: 1px solid #f0f0f0;
}
.grid th { height: 24px; padding: 0 6px; border-color: #e5e5e5; text-align: right; }
.grid th:first-child { text-align: left; }
.grid tbody td { height: 17px; line-height: 14px; border-bottom: 1px solid #f0f0f0; }
.grid .rest { border-right: 0; }
.grid tbody .val { padding: 2px 6px 0 0; overflow: hidden; text-align: right; white-space: pre; }
.grid .name { position: relative; }
.line { display: flex; height: 16px; }
.gutter { display: flex; flex: none; justify-content: flex-end; width: 24px; }
.ico { flex: none; width: 16px; height: 16px; }
.label { flex: 1; min-width: 0; box-sizing: border-box; padding: 2px 0 0 1px; }
.toggle { display: flex; flex: none; align-items: center; justify-content: center; width: 20px; height: 16px; }
.toggle.inner { width: 16px; }
.toggle svg { width: 10px; height: 10px; fill: none; stroke: #404040; stroke-width: 2; }
.shaded .label, .shaded .val { background: #f0f0f0; }
.group .label, .group .val { background: #dadada; }
.group .label { font-style: italic; }
.grid .hot, .grid .shaded .hot { background: #cfe4ff; }

.balloon {
  position: absolute;
  z-index: 2;
  top: 23px;
  left: 255px;
  display: flex;
  box-sizing: border-box;
  width: 168px;
  height: 56px;
  padding: 11px 0 0 11px;
  border: 1px solid #000;
  border-radius: 7px;
  background: #fff;
  box-shadow: 3px 3px 3px rgba(0, 0, 0, 0.45);
  font-family: "Open Sans", "Noto Sans", sans-serif;
}
.tail { position: absolute; top: -18px; left: 14px; width: 20px; height: 19px; }
.info { flex: none; width: 16px; height: 16px; margin-right: 5px; }
.tiptext { display: flex; flex-direction: column; gap: 2px; }
.tiptext strong { color: #003399; font-size: 15px; font-weight: 400; line-height: 16px; }
.tiptext span { font-size: 11px; line-height: 18px; }

.tools { display: flex; justify-content: space-between; box-sizing: border-box; height: 55px; padding: 7px 12px 0 1px; }
.side { display: flex; gap: 2px; }
.side.right { gap: 3px; }
.side button {
  display: flex;
  align-items: center;
  justify-content: center;
  box-sizing: border-box;
  width: 42px;
  height: 35px;
  border: 1px solid #adadad;
  background: #e1e1e1;
}
.side .spaced { margin-right: 7px; }
.side .spaced-s { margin-right: 1px; }
.side .primary { border: 2px solid #0078d7; }
.elapsed { width: 63px; font: 12px/32px "DejaVu Sans Condensed", sans-serif; text-align: right; }

.osd {
  position: absolute;
  top: 840px;
  right: 0;
  width: 28px;
  height: 34px;
  background: #000;
  color: #f00000;
  font: italic 700 24px/34px "DejaVu Sans", sans-serif;
  text-align: center;
}

.taskbar {
  display: flex;
  height: 40px;
  background: linear-gradient(90deg, #1c1c20 0%, #1f1f22 2%, #3a3835 13%, #45413a 22%, #3f382f 25%, #332824 28%, #272120 34%, #221d1b 60%, #2b2623 86%, #35322c 100%);
  color: #fff;
  font-family: "Open Sans", "Noto Sans", sans-serif;
}
.start, .taskview, .task { display: flex; align-items: center; justify-content: center; box-sizing: border-box; width: 48px; }
.search { display: flex; align-items: center; box-sizing: border-box; width: 288px; border: 1px solid #c4c4c4; background: #f2f2f2; }
.lens { width: 16px; height: 16px; margin: 0 12px; }
.search input { flex: 1; min-width: 0; padding: 0; border: 0; background: none; color: #222; font: 15px/20px "Open Sans", "Noto Sans", sans-serif; }
.search input::placeholder { color: #333; opacity: 1; }
.art { width: 78px; height: 38px; }
.task { margin-left: 1px; border-bottom: 2px solid transparent; border-top: 2px solid transparent; }
.taskview + .task { margin-left: 3px; }
.task svg { width: 24px; height: 24px; }
.task.open { border-bottom-color: #76b9ed; }
.task.active { border-bottom-color: #76b9ed; border-top-color: #4f4b49; background: #4f4b49; }
.tray { display: flex; align-items: center; margin-left: auto; }
.tray-btn { display: flex; align-items: center; justify-content: center; width: 24px; height: 40px; }
.tray-btn svg { width: 18px; height: 18px; fill: none; stroke: #f2f2f2; stroke-width: 1.2; }
.lang { width: 28px; font-size: 12px; text-align: right; }
.clockbox { display: flex; flex-direction: column; width: 82px; font-size: 11px; line-height: 18px; text-align: center; }
.notes { position: relative; width: 40px; height: 24px; padding: 2px 0 0 3px; text-align: left; }
.badge {
  position: absolute;
  left: 11px;
  top: 9px;
  box-sizing: border-box;
  width: 17px;
  height: 17px;
  border: 1px solid #8a8785;
  border-radius: 50%;
  background: #4a4745;
  font-size: 11px;
  line-height: 15px;
  text-align: center;
}
.peek { width: 4px; height: 40px; border-left: 1px solid #77736d; }
</style>
